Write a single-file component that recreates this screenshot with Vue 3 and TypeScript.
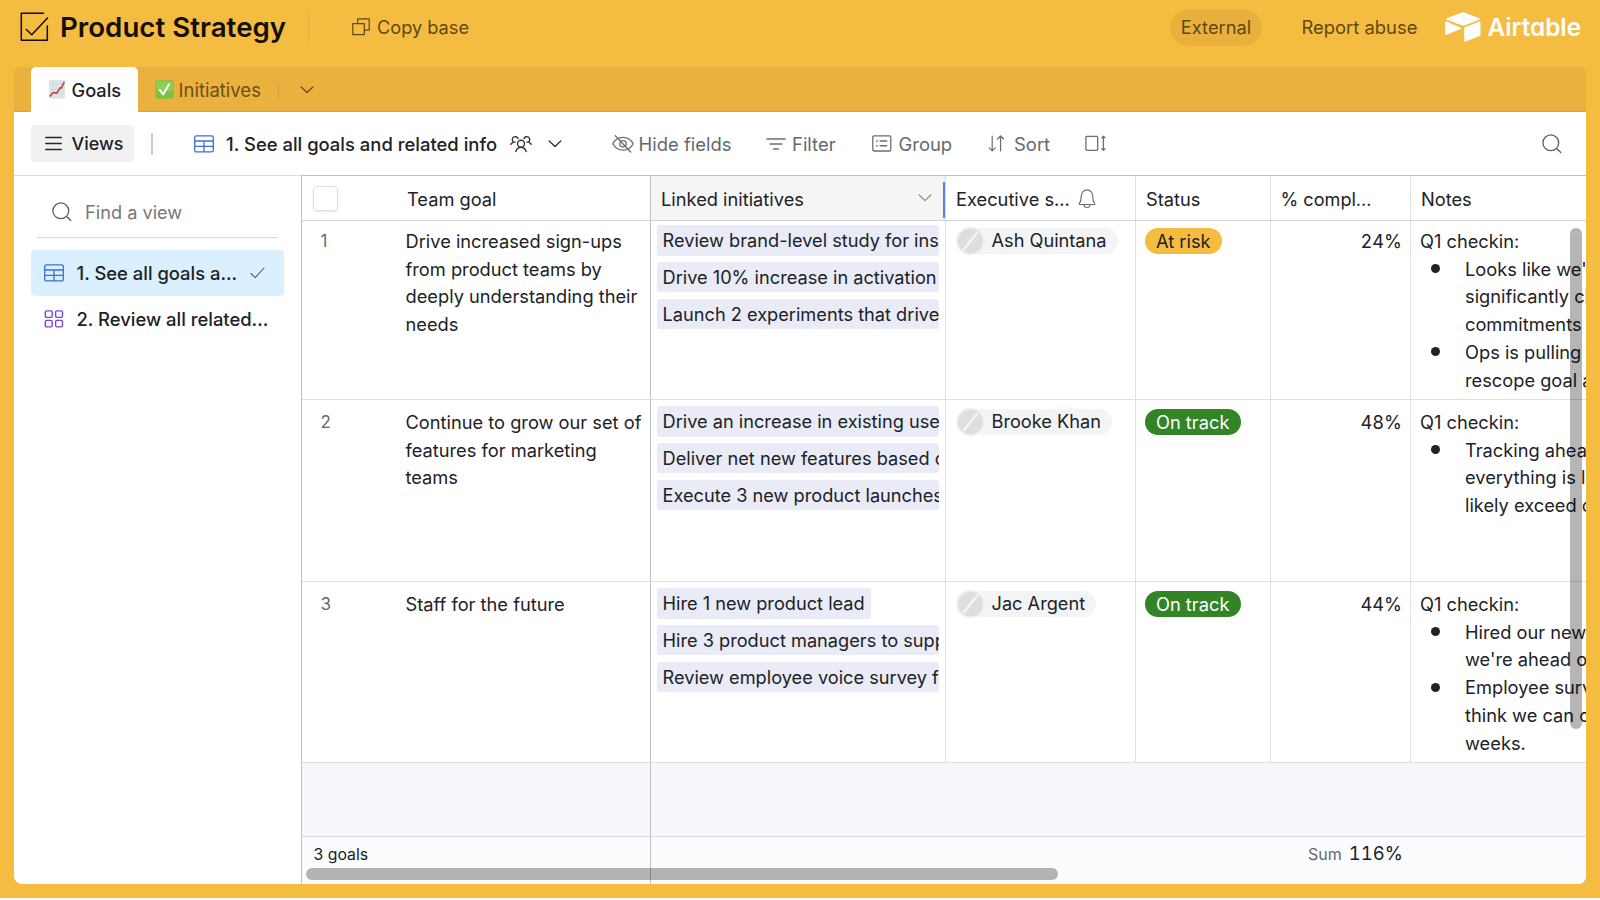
<script setup lang="ts">
interface NoteLine {
  text: string
  bullet?: boolean
}
interface Goal {
  id: number
  goal: string[]
  initiatives: string[]
  sponsor: string
  status: string
  tone: 'risk' | 'track'
  percent: string
  notes: NoteLine[]
}

const goals: Goal[] = [
  {
    id: 1,
    goal: ['Drive increased sign-ups', 'from product teams by', 'deeply understanding their', 'needs'],
    initiatives: [
      'Review brand-level study for ins',
      'Drive 10% increase in activation',
      'Launch 2 experiments that drive',
    ],
    sponsor: 'Ash Quintana',
    status: 'At risk',
    tone: 'risk',
    percent: '24%',
    notes: [
      { text: "Looks like we'", bullet: true },
      { text: 'significantly ch' },
      { text: 'commitments' },
      { text: 'Ops is pulling', bullet: true },
      { text: 'rescope goal a' },
    ],
  },
  {
    id: 2,
    goal: ['Continue to grow our set of', 'features for marketing', 'teams'],
    initiatives: [
      'Drive an increase in existing use',
      'Deliver net new features based o',
      'Execute 3 new product launches',
    ],
    sponsor: 'Brooke Khan',
    status: 'On track',
    tone: 'track',
    percent: '48%',
    notes: [
      { text: 'Tracking ahea', bullet: true },
      { text: 'everything is l' },
      { text: 'likely exceed o' },
    ],
  },
  {
    id: 3,
    goal: ['Staff for the future'],
    initiatives: [
      'Hire 1 new product lead',
      'Hire 3 product managers to supp',
      'Review employee voice survey fo',
    ],
    sponsor: 'Jac Argent',
    status: 'On track',
    tone: 'track',
    percent: '44%',
    notes: [
      { text: 'Hired our new', bullet: true },
      { text: "we're ahead o" },
      { text: 'Employee surv', bullet: true },
      { text: 'think we can c' },
      { text: 'weeks.' },
    ],
  },
]
</script>

<template>
  <div class="app">
    <header class="top">
      <svg class="logo-check" width="32" height="32" viewBox="0 0 32 32" fill="none" stroke="#140f02" stroke-width="1.5" stroke-linecap="round" stroke-linejoin="round">
        <path d="M24.5 2.3H2.3v27h26V15" />
        <path d="M7.3 18.5l5.500 5.300L28.500 7" />
      </svg>
      <h1 class="title">Product Strategy</h1>
      <i class="top-rule"></i>
      <svg class="copy-icon" width="18" height="18" viewBox="0 0 18 18" fill="none" stroke="#5f490f" stroke-width="1.2" stroke-linejoin="round">
        <path d="M.8 5.700h11.500v11H.8z" />
        <path d="M5.700 5.700V.8h11.500v11.400h-4.900" />
      </svg>
      <span class="copy">Copy base</span>
      <span class="external">External</span>
      <span class="report">Report abuse</span>
      <svg class="brand-mark" width="36" height="30" viewBox="0 0 36 30" fill="#fff">
        <path d="M16.2.7L1.9 6.2c-.8.3-.8 1.2 0 1.5l14.4 5.5c1.200.5 2.500.5 3.700 0l14.300-5.500c.8-.3.800-1.200 0-1.500L19.900.7c-1.200-.5-2.500-.5-3.700 0z" />
        <path d="M19.200 16.200v12.600c0 .7.600 1 1.200.8l14.500-5.700c.4-.2.600-.5.600-.9V10.400c0-.6-.6-1-1.200-.8L19.900 15.200c-.4.200-.7.600-.7 1z" />
        <path d="M16 15.800L1.600 9.600C1 9.300.2 9.700.2 10.400v11.500c0 .8.700 1.200 1.300.9l14.300-5.800c.5-.3.600-.9.200-1.200z" />
      </svg>
      <span class="brand">Airtable</span>
    </header>

    <nav class="tabs">
      <div class="tab active">
        <svg width="16" height="19" viewBox="0 0 16 19">
          <rect width="16" height="18.500" rx="1" fill="#dfe5ea" />
          <path d="M4 0v18M8 0v18M12 0v18M0 4.500h16M0 9h16M0 13.500h16" stroke="#cfd7de" stroke-width=".7" />
          <path d="M.8 16.500l3.400-4 3.600.7 3.400-5.500 1.300.2L15.300 1.800" fill="none" stroke="#c93a3a" stroke-width="1.500" stroke-linejoin="round" />
        </svg>
        <span>Goals</span>
      </div>
      <div class="tab idle">
        <svg width="19" height="19" viewBox="0 0 19 19">
          <rect x=".3" y=".3" width="18.400" height="18.400" rx="3" fill="#7cc043" />
          <rect x="1.300" y="1.300" width="16.400" height="10" rx="2.500" fill="#8fcf55" />
          <path d="M4.800 10l3.300 4.500L14 4.300" fill="none" stroke="#fff" stroke-width="1.900" stroke-linecap="round" stroke-linejoin="round" />
        </svg>
        <span>Initiatives</span>
      </div>
      <i class="tab-rule"></i>
      <svg class="tab-chev" width="14" height="8" viewBox="0 0 14 8" fill="none" stroke="#6b4f12" stroke-width="1.400" stroke-linecap="round" stroke-linejoin="round"><path d="M1.200 1l5.800 5.600L12.800 1" /></svg>
    </nav>

    <main class="panel">
      <div class="toolbar">
        <div class="views-btn">
          <svg width="17" height="15" viewBox="0 0 17 15" stroke="#25272b" stroke-width="1.300" stroke-linecap="round"><path d="M.7 1.500h15.600M.7 7.500h15.600M.7 13.500h15.600" /></svg>
          <span>Views</span>
        </div>
        <i class="tool-rule"></i>
        <svg class="grid-icon" width="20" height="18" viewBox="0 0 20 18" fill="none" stroke="#3b6fdb" stroke-width="1.300"><rect x=".7" y=".9" width="18.600" height="16" rx="1.600" /><path d="M.7 6h18.600M.7 11.400h18.600M10 6v10.900" /></svg>
        <span class="view-name">1. See all goals and related info</span>
        <svg class="people" width="22" height="18" viewBox="0 0 22 18" fill="none" stroke="#33363b" stroke-width="1.400" stroke-linecap="round" stroke-linejoin="round">
          <circle cx="11" cy="8.800" r="3.500" />
          <path d="M5.800 16.500c1-2.800 2.800-4.200 5.200-4.200s4.200 1.400 5.200 4.200" />
          <path d="M.8 9.300c.8-1 1.500-1.700 2.600-2.200C2 5.800 1.900 3.500 3.300 2.300c1.700-1.300 4-.6 4.700 1.300M3.400 7.100h1.700" />
          <path d="M21.200 9.300c-.8-1-1.500-1.700-2.600-2.200 1.400-1.300 1.500-3.600.1-4.800-1.700-1.300-4-.6-4.700 1.300M18.600 7.100h-1.700" />
        </svg>
        <svg class="view-chev" width="14" height="8" viewBox="0 0 14 8" fill="none" stroke="#33363b" stroke-width="1.400" stroke-linecap="round" stroke-linejoin="round"><path d="M1.200 1l5.800 5.600L12.800 1" /></svg>
        <div class="tool hide">
          <svg width="22" height="18" viewBox="0 0 22 18" fill="none" stroke="#6b6e74" stroke-width="1.300" stroke-linecap="round" stroke-linejoin="round">
            <path d="M.8 8.800C3 4.500 6.500 2.400 11 2.400s8 2.100 10.200 6.400C19 13.100 15.500 15.200 11 15.200S3 13.100.8 8.800z" />
            <path d="M14.200 8.800a3.200 3.200 0 1 1-6.400 0 3.200 3.200 0 0 1 6.400 0z" />
            <path d="M3.300.8L18.600 17" />
          </svg>
          <span>Hide fields</span>
        </div>
        <div class="tool filter">
          <svg width="20" height="12" viewBox="0 0 20 12" stroke="#6b6e74" stroke-width="1.300" stroke-linecap="round"><path d="M.8 1h18.400M4 6h12M7.500 11h5" /></svg>
          <span>Filter</span>
        </div>
        <div class="tool group">
          <svg width="20" height="17" viewBox="0 0 20 17" fill="none" stroke="#6b6e74" stroke-width="1.300" stroke-linecap="round"><rect x=".8" y=".8" width="18" height="15.200" rx="1.300" /><path d="M4.700 6h.5M4.700 10.700h.5M8.200 6h6.500M8.200 10.700h6.500" stroke-width="1.500" /></svg>
          <span>Group</span>
        </div>
        <div class="tool sort">
          <svg width="17" height="17" viewBox="0 0 17 17" fill="none" stroke="#6b6e74" stroke-width="1.200" stroke-linecap="round" stroke-linejoin="round"><path d="M4.200 1v14.800M1.200 12.900l3 3 3-3M12.600 15.900V1M9.600 4l3-3 3 3" /></svg>
          <span>Sort</span>
        </div>
        <svg class="height-icon" width="22" height="17" viewBox="0 0 22 17" fill="none" stroke="#6b6e74" stroke-width="1.300" stroke-linecap="round" stroke-linejoin="round"><rect x=".9" y="1.300" width="11.800" height="14" rx="1" /><path d="M18.400 1.500v13.800M16.800 2.900l1.600-1.600 1.600 1.600M16.800 13.800l1.600 1.600 1.600-1.600" /></svg>
        <svg class="search-icon" width="20" height="20" viewBox="0 0 20 20" fill="none" stroke="#5a5d62" stroke-width="1.300" stroke-linecap="round"><circle cx="8.800" cy="8.800" r="7.900" /><path d="M14.500 14.500l4.300 4" /></svg>
      </div>

      <div class="body">
        <aside class="side">
          <div class="find">
            <svg width="20" height="20" viewBox="0 0 20 20" fill="none" stroke="#5a5d62" stroke-width="1.300" stroke-linecap="round"><circle cx="8.800" cy="8.800" r="7.900" /><path d="M14.500 14.500l4.300 4" /></svg>
            <span>Find a view</span>
          </div>
          <div class="view selected">
            <svg class="vi" width="20" height="18" viewBox="0 0 20 18" fill="none" stroke="#3b6fdb" stroke-width="1.300"><rect x=".7" y=".9" width="18.600" height="16" rx="1.600" /><path d="M.7 6h18.600M.7 11.400h18.600M10 6v10.900" /></svg>
            <span>1. See all goals a...</span>
            <svg class="tick" width="15" height="12" viewBox="0 0 15 12" fill="none" stroke="#51626f" stroke-width="1.100" stroke-linecap="round" stroke-linejoin="round"><path d="M.9 6.500l4.300 4.200L14 1" /></svg>
          </div>
          <div class="view">
            <svg class="vi" width="20" height="18" viewBox="0 0 20 18" fill="none" stroke="#7c45d8" stroke-width="1.400"><rect x="1.300" y=".9" width="6.900" height="6.500" rx="1.300" /><rect x="11.600" y=".9" width="6.900" height="6.500" rx="1.300" /><rect x="1.300" y="10.400" width="6.900" height="6.500" rx="1.300" /><rect x="11.600" y="10.400" width="6.900" height="6.500" rx="1.300" /></svg>
            <span>2. Review all related...</span>
          </div>
        </aside>

        <section class="table">
          <div class="row head">
            <div class="cell frozen"><i class="checkbox"></i><span>Team goal</span></div>
            <div class="cell linked">
              <span>Linked initiatives</span>
              <svg width="14" height="8" viewBox="0 0 14 8" fill="none" stroke="#8b8d91" stroke-width="1.200" stroke-linecap="round" stroke-linejoin="round"><path d="M1.200 1l5.800 5.600L12.800 1" /></svg>
              <i class="resize"></i>
            </div>
            <div class="cell">
              <span>Executive s...</span>
              <svg class="bell" width="18" height="20" viewBox="0 0 18 20" fill="none" stroke="#6b6e74" stroke-width="1.200" stroke-linecap="round" stroke-linejoin="round"><path d="M3.300 7.200C3.300 3.500 5.800.9 9 .9s5.700 2.600 5.700 6.300c0 4.300 1 6 1.900 7.300.4.600.1 1-.5 1H1.900c-.6 0-.9-.4-.5-1 .9-1.300 1.900-3 1.900-7.300zM6 15.700c.2 1.800 1.400 2.800 3 2.800s2.800-1 3-2.800" /></svg>
            </div>
            <div class="cell"><span>Status</span></div>
            <div class="cell compl"><span>% compl...</span></div>
            <div class="cell last"><span>Notes</span></div>
          </div>

          <div v-for="g in goals" :key="g.id" class="row data" :class="{ first: g.id === 1 }">
            <div class="cell frozen">
              <span class="num">{{ g.id }}</span>
              <div class="lines"><div v-for="l in g.goal" :key="l">{{ l }}</div></div>
            </div>
            <div class="cell chips">
              <div v-for="c in g.initiatives" :key="c" class="chip">{{ c }}</div>
            </div>
            <div class="cell">
              <div class="person">
                <svg class="avatar" width="29" height="30" viewBox="0 0 29 30"><circle cx="14.500" cy="15" r="14.300" fill="#f1f1f1" /><circle cx="14.500" cy="15" r="12.500" fill="#dedede" /><path d="M7.300 24L21.700 6" stroke="#f5f5f5" stroke-width="2.400" /></svg>
                <span>{{ g.sponsor }}</span>
              </div>
            </div>
            <div class="cell"><span class="status" :class="g.tone">{{ g.status }}</span></div>
            <div class="cell percent">{{ g.percent }}</div>
            <div class="cell last notes">
              <div>Q1 checkin:</div>
              <div v-for="n in g.notes" :key="n.text" class="note"><i v-if="n.bullet" class="dot"></i>{{ n.text }}</div>
            </div>
          </div>

          <div class="blank"><i></i></div>
          <div class="summary">
            <div class="count">3 goals</div>
            <div class="total"><small>Sum</small><span>116%</span></div>
          </div>
          <i class="bar-v"></i>
          <i class="bar-h"></i>
        </section>
      </div>
    </main>
  </div>
</template>

<style>
body {
  background: #fff;
  overflow: hidden;
}
</style>

<style scoped>
* {
  box-sizing: border-box;
}
.app {
  width: 1600px;
  height: 898px;
  padding: 0 14px 14px;
  display: flex;
  flex-direction: column;
  background: #f5bc42;
  font-family: Inter, 'Liberation Sans', sans-serif;
  font-size: 18.25px;
  color: #202226;
  white-space: nowrap;
  overflow: hidden;
}
svg {
  display: block;
  flex: none;
}
i {
  display: block;
  flex: none;
}
.top {
  height: 67px;
  padding-bottom: 13px;
  display: flex;
  align-items: center;
  color: #5f490f;
}
.logo-check {
  margin: 0 0 0 4.500px;
}
.title {
  margin: 0 0 0 9.500px;
  width: 248px;
  font-size: 27.700px;
  font-weight: 600;
  color: #140f02;
}
.top-rule {
  width: 1px;
  height: 28px;
  background: #e2ac3a;
}
.copy-icon {
  margin-left: 43px;
}
.copy {
  margin-left: 7px;
  width: 793px;
  font-size: 18.200px;
}
.external {
  width: 92px;
  height: 37px;
  line-height: 37px;
  border-radius: 19px;
  background: #e9b03e;
  text-align: center;
}
.report {
  margin-left: 39.500px;
  width: 143.500px;
  font-size: 18.400px;
}
.brand-mark {
  margin-top: -1px;
}
.brand {
  margin-left: 6.500px;
  font-size: 24.300px;
  font-weight: 600;
  color: #fff;
  font-feature-settings: 'cv11';
}
.tabs {
  height: 45px;
  padding-left: 17px;
  display: flex;
  align-items: center;
  background: #eab13f;
  border-radius: 6px 6px 0 0;
  box-shadow: inset 0 -2px 1px -1px #d9a033;
  color: #6b4f12;
}
.tab {
  display: flex;
  align-items: center;
}
.tab.active {
  width: 107px;
  height: 45px;
  padding-left: 18px;
  background: #fff;
  border-radius: 5px 5px 0 0;
  color: #202226;
  font-weight: 500;
}
.active span {
  margin-left: 6.500px;
}
.tab.idle {
  width: 140px;
  padding-left: 17px;
  font-size: 18.500px;
}
.idle span {
  margin: 1px 0 0 4.500px;
}
.tab-rule {
  width: 1px;
  height: 16px;
  background: #d6a037;
}
.tab-chev {
  margin-left: 21px;
}
.panel {
  flex: 1;
  min-height: 0;
  background: #fff;
  border-radius: 0 0 8px 8px;
  overflow: hidden;
  display: flex;
  flex-direction: column;
}
.toolbar {
  height: 63px;
  padding: 0 24px 0 17px;
  flex: none;
  display: flex;
  align-items: center;
  font-size: 18.450px;
}
.views-btn {
  width: 103px;
  height: 37px;
  padding-left: 14px;
  display: flex;
  align-items: center;
  gap: 9.500px;
  border-radius: 4px;
  background: #f1f1f1;
  font-size: 17.900px;
  font-weight: 500;
}
.tool-rule {
  width: 2px;
  height: 22px;
  margin-left: 17px;
  background: #ccc;
}
.grid-icon {
  margin-left: 40.500px;
}
.view-name {
  margin-left: 12.500px;
  width: 283.500px;
  font-weight: 500;
}
.people {
  width: 22px;
}
.view-chev {
  margin-left: 16px;
}
.tool {
  display: flex;
  align-items: center;
  color: #65686e;
}
.hide {
  margin-left: 50px;
  width: 154.500px;
}
.hide span {
  margin-left: 5px;
}
.filter {
  width: 106px;
}
.filter span {
  margin-left: 6px;
}
.group {
  width: 115.500px;
}
.group span {
  margin-left: 6.500px;
}
.sort {
  width: 97px;
}
.sort span {
  margin-left: 9.500px;
}
.search-icon {
  margin-left: auto;
}
.body {
  flex: 1;
  min-height: 0;
  display: flex;
}
.side {
  width: 287px;
  border-top: 1px solid #dcdddf;
}
.find {
  width: 241px;
  height: 62px;
  margin-left: 23px;
  padding: 11px 0 0 15px;
  display: flex;
  align-items: center;
  gap: 13px;
  border-bottom: 1px solid #d9dadc;
  font-size: 18.200px;
  color: #75777b;
}
.view {
  margin: 0 17px;
  height: 46px;
  padding-left: 13px;
  display: flex;
  align-items: center;
  border-radius: 4px;
  font-weight: 500;
  font-size: 18.400px;
}
.view.selected {
  margin-top: 12px;
  background: #dbf0fe;
}
.view span {
  margin-left: 12.500px;
}
.tick {
  margin-left: auto;
  margin-right: 19px;
}
.table {
  position: relative;
  flex: 1;
  min-width: 0;
  border-left: 1px solid #bfc0c3;
  border-top: 1px solid #bfc0c3;
  display: flex;
  flex-direction: column;
  overflow: hidden;
}
.row {
  display: grid;
  grid-template-columns: 349px 295px 190px 135px 140px minmax(0, 1fr);
  flex: none;
}
.cell {
  border-right: 1px solid #dddfe3;
  min-width: 0;
  overflow: hidden;
}
.cell.last {
  border-right: 0;
}
.frozen {
  display: flex;
  border-right-color: #bfc0c3;
}
.head {
  height: 45px;
  border-bottom: 1px solid #cfd1d4;
}
.head .cell {
  display: flex;
  align-items: center;
  padding: 1px 0 0 10px;
}
.head .compl {
  padding-left: 9.500px;
  font-size: 18.100px;
}
.checkbox {
  width: 25px;
  height: 25px;
  margin: 0 69.500px 0 .5px;
  border: 1px solid #dedfe2;
  border-radius: 4px;
  box-shadow: 0 1px 2px rgba(0, 0, 0, 0.1);
}
.head .linked {
  position: relative;
  background: #f5f5f5;
}
.linked svg {
  margin: -2px 0 0 auto;
  margin-right: 13px;
}
.resize {
  position: absolute;
  right: 0;
  top: 6px;
  width: 2px;
  height: 36px;
  background: #5f80dc;
}
.bell {
  margin: 0 0 0 8px;
}
.data {
  height: 182px;
  border-bottom: 1px solid #dddfe3;
  line-height: 27.700px;
}
.data.first {
  height: 179px;
}
.data .cell {
  padding-top: 9px;
}
.data.first .cell {
  padding-top: 7px;
}
.data + .data:nth-child(4) {
  height: 181px;
}
.num {
  width: 103.500px;
  padding-left: 18.500px;
  flex: none;
  font-size: 17px;
  color: #65686e;
}
.data .chips {
  padding: 6px 6px 0 6px;
  display: flex;
  flex-direction: column;
  align-items: flex-start;
  gap: 6.100px;
}
.data.first .chips {
  padding-top: 4px;
}
.chip {
  max-width: 282px;
  height: 30.700px;
  line-height: 30.700px;
  padding: 0 6px 0 5.500px;
  border-radius: 3px;
  background: #e9ebf7;
  font-size: 18.200px;
  overflow: hidden;
}
.person {
  width: max-content;
  height: 26px;
  margin: 0 0 0 9.500px;
  padding-right: 11px;
  display: flex;
  align-items: center;
  border-radius: 13px;
  background: #f3f4f6;
  font-size: 18.200px;
}
.avatar {
  margin: -2px 7px -2px 0;
}
.status {
  display: block;
  width: max-content;
  height: 26px;
  margin: -0.500px 0 0 8.500px;
  padding: 0 11.500px;
  border-radius: 13px;
  line-height: 26px;
}
.risk {
  background: #f5bc42;
}
.track {
  background: #338427;
  color: #fff;
}
.percent {
  padding-right: 8px;
  text-align: right;
  font-feature-settings: 'tnum';
}
.notes {
  padding-left: 9px;
}
.note {
  position: relative;
  padding-left: 45px;
}
.dot {
  position: absolute;
  left: 10.500px;
  top: 8.500px;
  width: 9px;
  height: 9px;
  border-radius: 50%;
  background: #202226;
}
.blank {
  height: 74px;
  flex: none;
  background: #f5f7fb;
  border-bottom: 1px solid #d6dae0;
}
.blank i {
  width: 349px;
  height: 73px;
  border-right: 1px solid #bfc0c3;
}
.summary {
  flex: 1;
  display: flex;
  background: #fbfcfd;
}
.count {
  width: 349px;
  padding: 8px 0 0 11.500px;
  border-right: 1px solid #bfc0c3;
  font-size: 15.800px;
  line-height: 20px;
}
.total {
  width: 752px;
  height: 36px;
  display: flex;
  justify-content: flex-end;
  align-items: baseline;
  gap: 7px;
  padding-top: 5px;
  font-size: 18.500px;
}
.total span {
  font-feature-settings: 'tnum';
}
.total small {
  font-size: 16px;
  color: #65686e;
}
.bar-v {
  position: absolute;
  right: 4px;
  top: 52px;
  width: 12px;
  height: 501px;
  border-radius: 6px;
  background: rgba(0, 0, 0, 0.29);
}
.bar-h {
  position: absolute;
  left: 4px;
  bottom: 4px;
  width: 752px;
  height: 12px;
  border-radius: 6px;
  background: rgba(0, 0, 0, 0.29);
}
</style>
